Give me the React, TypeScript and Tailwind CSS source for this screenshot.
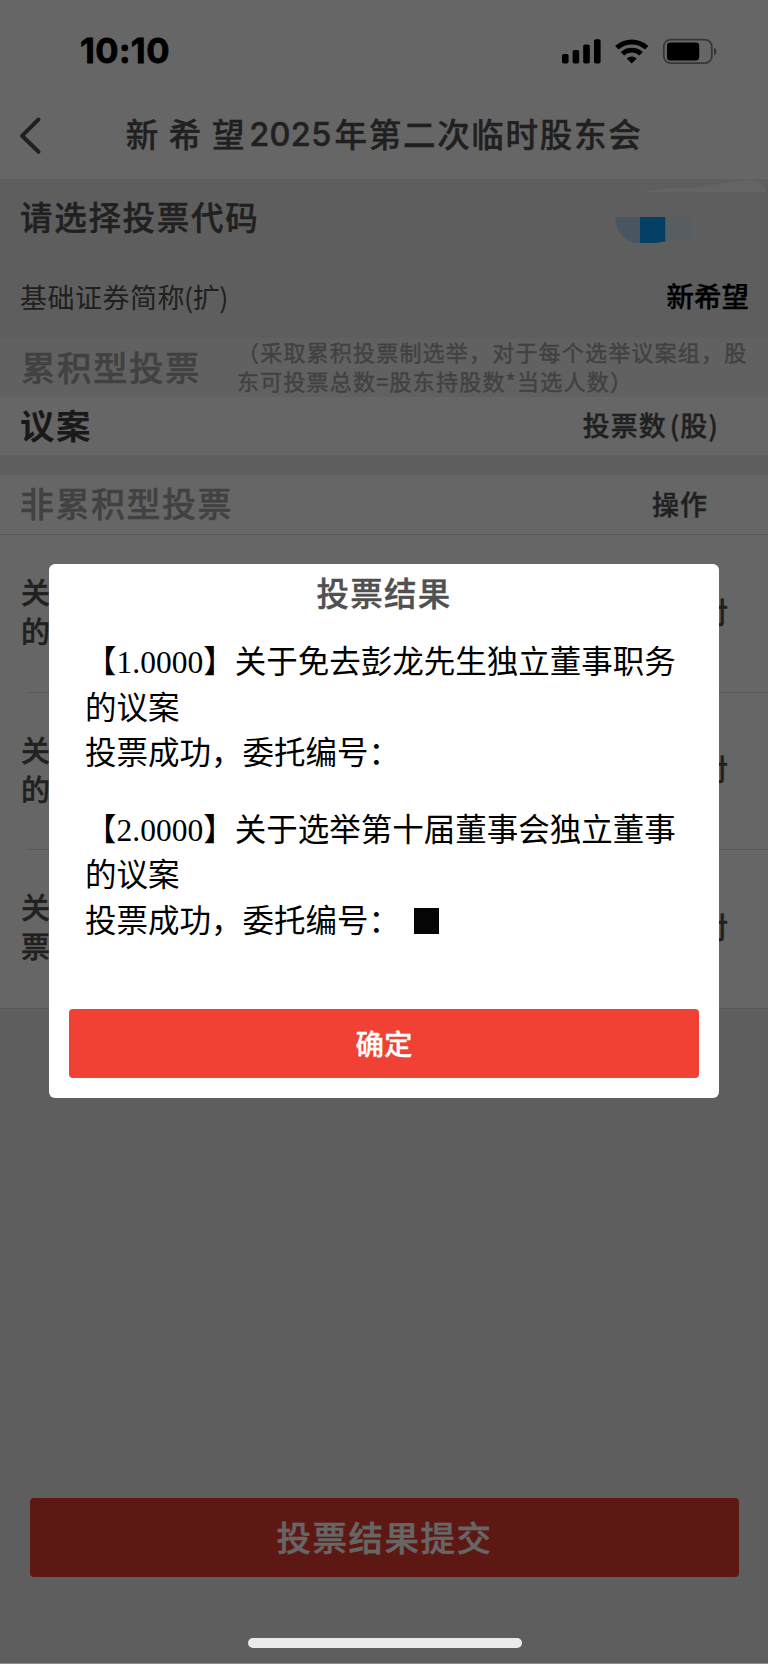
import React from 'react';

const proposals = [
  { id: 1, lines: ['关', '的'], action: '对' },
  { id: 2, lines: ['关', '的'], action: '对' },
  { id: 3, lines: ['关', '票'], action: '对' },
];

const results = [
  { code: '1.0000', title: '关于免去彭龙先生独立董事职务', redacted: false },
  { code: '2.0000', title: '关于选举第十届董事会独立董事', redacted: true },
];

function StatusIcons() {
  return (
    <svg width="156" height="27" viewBox="561 37 156 27" fill="#000">
      <rect x="562" y="53" width="6.6" height="9.6" rx="1.8" />
      <rect x="572.6" y="49" width="6.6" height="13.6" rx="1.8" />
      <rect x="583.2" y="43.5" width="6.6" height="19.1" rx="1.8" />
      <rect x="594" y="38.3" width="6.6" height="24.3" rx="1.8" />
      <g fill="none" stroke="#000" strokeWidth="4.9">
        <path d="M616.8 46.8a22 22 0 0 1 29.9 0" />
        <path d="M622.4 52.8a13.6 13.6 0 0 1 18.7 0" />
      </g>
      <path d="M631.7 62.6l-5-5a7 7 0 0 1 10 0z" />
      <rect x="663.8" y="38.6" width="48" height="23.6" rx="7" fill="none" stroke="#8a8a8a" strokeWidth="1.8" />
      <rect x="667" y="41.6" width="32.2" height="17.8" rx="3.4" />
      <path d="M714 46.8c3.2 1.2 3.2 6.4 0 7.6z" fill="#8a8a8a" />
    </svg>
  );
}

function VotePage() {
  return (
    <div className="flex h-full flex-col bg-[#ebebeb] text-[#505050] [-webkit-text-stroke:0.4px]">
      <div className="bg-white">
        <div className="flex h-[92px] items-center justify-between pr-[51px] pl-[80px] pt-[10px]">
          <span className="font-['Inter'] text-[34.5px] font-bold leading-none tracking-[0.4px] text-black [-webkit-text-stroke:0.8px]">10:10</span>
          <StatusIcons />
        </div>
        <div className="relative flex h-[87px] items-center justify-center pb-[3px]">
          <svg className="absolute left-[18px] top-[24px]" width="26" height="40" viewBox="0 0 26 40" fill="none" stroke="#525252" strokeWidth="4" strokeLinecap="round" strokeLinejoin="round">
            <path d="M20.5 3.500L4 19.8l16.5 16" />
          </svg>
          <h1 className="flex text-[32.5px] font-medium leading-none tracking-[1.7px]">
            <span>新</span>
            <span className="ml-[9px]">希</span>
            <span className="ml-[9px]">望</span>
            <span className="mx-[3px] pt-[2px] font-['Inter'] tracking-[0.3px]">2025</span>
            <span>年第二次临时股东会</span>
          </h1>
        </div>
      </div>

      <div className="relative flex h-[78px] items-center justify-between pl-[20px] pr-[77px]">
        <span className="pb-[3px] text-[32.5px] font-medium leading-none tracking-[1.7px]">请选择投票代码</span>
        <svg className="mt-[24px]" width="76" height="26" viewBox="0 0 76 26">
          <path d="M0 0h25v26h-6C8 23 0 12 0 0z" fill="#b9d5f5" />
          <path d="M25 0h25.5v24.5L40 26H25z" fill="#0ca0ff" />
          <path d="M50.500 0H76v24H50.500z" fill="#dbe8f2" />
        </svg>
        <svg className="absolute right-[2px] top-[1px]" width="124" height="12" viewBox="0 0 124 12">
          <path d="M0 12C18 8 38 8 52 8C72 6 90 0 106 0c10 0 18 3 18 12z" fill="#fafafa" />
        </svg>
      </div>
      <div className="flex h-[81px] items-center justify-between pb-[3px] pl-[20px] pr-[19px]">
        <span className="text-[27px] leading-none tracking-[0.5px] [-webkit-text-stroke:0px]">
          基础证券简称<span className="-ml-[1px] -mr-[1px]">(</span>扩<span className="-ml-[1px]">)</span>
        </span>
        <span className="text-[27.5px] font-medium leading-none text-black">新希望</span>
      </div>

      <div className="flex h-[59px] items-center bg-[#f2f2f2] pb-[3px] pl-[21px]">
        <span className="w-[216px] text-[34.5px] font-medium leading-none tracking-[1.5px] text-[#a3a3a3]">累积型投票</span>
        <p className="whitespace-nowrap text-[22px] leading-[29px] tracking-[1.2px] text-[#a3a3a3]">
          （采取累积投票制选举，对于每个选举议案组，股
          <br />
          东可投票总数=股东持股数*当选人数）
        </p>
      </div>
      <div className="flex h-[58px] items-center justify-between bg-white pb-[3px] pl-[20px] pr-[49px]">
        <span className="text-[34.5px] font-bold leading-none tracking-[1.5px] text-[#404040] [-webkit-text-stroke:0px]">议案</span>
        <span className="text-[27px] font-medium leading-none tracking-[1px] [word-spacing:-4px]">投票数 (股)</span>
      </div>
      <div className="mt-[20px] flex h-[60px] items-center justify-between border-b border-[#d6d6d6] bg-white pb-[3px] pl-[20px] pr-[60px]">
        <span className="text-[34px] font-medium leading-none tracking-[1.5px] text-[#a3a3a3]">非累积型投票</span>
        <span className="text-[27px] font-medium leading-none tracking-[1px]">操作</span>
      </div>

      <ul className="border-b border-[#d6d6d6] bg-white">
        {proposals.map((item, i) => (
          <li key={item.id} className="relative flex h-[157.5px] items-center justify-between pb-[5px] pl-[21px] pr-[40px]">
            <p className="text-[29px] font-medium leading-[39px] tracking-[1px]">
              {item.lines[0]}
              <br />
              {item.lines[1]}
            </p>
            <span className="text-[29px] font-medium leading-none">{item.action}</span>
            {i < proposals.length - 1 && <i className="absolute bottom-0 left-[27px] right-0 h-px bg-[#d6d6d6]" />}
          </li>
        ))}
      </ul>

      <div className="mt-auto pb-[87px] pl-[30px] pr-[29px]">
        <button className="h-[79px] w-full rounded-[4px] bg-[#ea3e32] pb-[3px] text-[34.5px] font-medium leading-none tracking-[1.5px] text-white">
          投票结果提交
        </button>
      </div>
    </div>
  );
}

function ResultDialog() {
  return (
    <div className="absolute left-[49px] top-[564px] flex h-[534px] w-[670px] flex-col rounded-[6px] bg-white px-[20px] pb-[20px] pt-[11px]">
      <h2 className="text-center text-[32.5px] font-medium leading-[34px] tracking-[1.2px] text-[#505050] [-webkit-text-stroke:0.4px]">投票结果</h2>
      <div className="mt-[31px] flex flex-col gap-[31px] whitespace-nowrap pl-[16px] font-['Liberation_Serif','Noto_Sans_CJK_SC',sans-serif] text-[31.5px] leading-[45.5px] text-black">
        {results.map(r => (
          <div key={r.code}>
            <p>【{r.code}】{r.title}</p>
            <p>的议案</p>
            <p className="flex items-center">
              投票成功，委托编号：
              {r.redacted && <span className="ml-[14px] h-[26px] w-[25px] bg-[#050505]" />}
            </p>
          </div>
        ))}
      </div>
      <button className="mt-auto h-[69px] w-full rounded-[4px] bg-[#f04134] pb-[1px] text-[28.5px] font-medium leading-none text-white [-webkit-text-stroke:0.3px]">
        确定
      </button>
    </div>
  );
}

export default function App() {
  return (
    <div className="relative h-[1664px] w-[768px] overflow-hidden font-['Noto_Sans_CJK_SC',sans-serif]">
      <VotePage />
      <div className="absolute inset-0 bg-black/60" />
      <ResultDialog />
      <div className="absolute bottom-[16px] left-[248px] h-[10px] w-[274px] rounded-full bg-[#ebebeb]" />
      <div className="absolute bottom-0 left-0 h-px w-full bg-[#8c8c8c]" />
    </div>
  );
}
